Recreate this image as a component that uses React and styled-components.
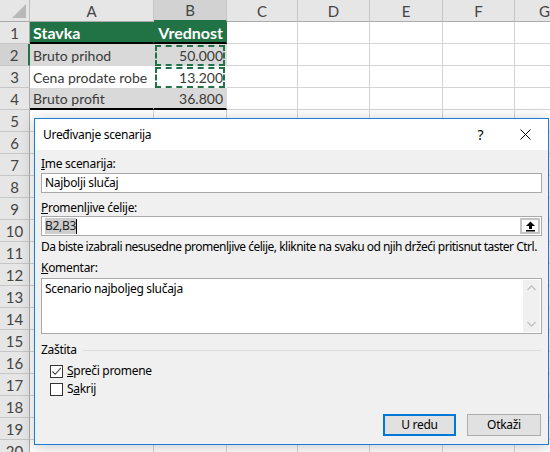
import React from 'react';
import styled, { createGlobalStyle, css } from 'styled-components';

const GlobalStyle = createGlobalStyle`
  html, body {
    margin: 0;
    padding: 0;
    background: #fff;
    overflow: hidden;
  }
  body {
    width: 550px;
    height: 452px;
  }
`;

const columns = [
  { name: 'A', width: 124 },
  { name: 'B', width: 73, selected: true },
  { name: 'C', width: 71 },
  { name: 'D', width: 72 },
  { name: 'E', width: 73 },
  { name: 'F', width: 72 },
  { name: 'G', width: 60 },
];

const data = {
  1: [
    { text: 'Stavka', fill: 'green' },
    { text: 'Vrednost', fill: 'green', right: true },
  ],
  2: [
    { text: 'Bruto prihod', fill: 'gray' },
    { text: '50.000', fill: 'gray', right: true, ants: true },
  ],
  3: [
    { text: 'Cena prodate robe', fill: 'white' },
    { text: '13.200', fill: 'white', right: true, ants: true },
  ],
  4: [
    { text: 'Bruto profit', fill: 'gray' },
    { text: '36.800', fill: 'gray', right: true },
  ],
};

const fills = {
  green: '#217346',
  gray: '#d9d9d9',
  white: '#ffffff',
};

const Sheet = styled.div`
  position: relative;
  width: 550px;
  height: 452px;
  overflow: hidden;
  display: grid;
  grid-template-columns: 30px ${columns.map((c) => c.width + 'px').join(' ')};
  grid-auto-rows: 22px;
  font-family: Lato, 'Liberation Sans', sans-serif;
  font-size: 14px;
`;

const Corner = styled.div`
  position: relative;
  background: #e6e6e6;
  border-right: 1px solid #bfbfbf;
  border-bottom: 1px solid #ababab;
  box-sizing: border-box;

  &::after {
    content: '';
    position: absolute;
    right: 3px;
    bottom: 3px;
    width: 0;
    height: 0;
    border-left: 14px solid transparent;
    border-bottom: 14px solid #b8b8b8;
  }
`;

const ColHeader = styled.div`
  display: flex;
  align-items: center;
  justify-content: center;
  box-sizing: border-box;
  font-size: 15px;
  color: #444;
  background: ${(p) => (p.$selected ? '#d2d2d2' : '#e6e6e6')};
  border-right: 1px solid #c6c6c6;
  border-bottom: ${(p) => (p.$selected ? '2px solid #217346' : '1px solid #ababab')};
`;

const RowHeader = styled.div`
  display: flex;
  align-items: center;
  justify-content: center;
  box-sizing: border-box;
  font-size: 15px;
  color: #444;
  background: ${(p) => (p.$selected ? '#d2d2d2' : '#e6e6e6')};
  border-bottom: 1px solid #c6c6c6;
  border-right: ${(p) => (p.$selected ? '2px solid #217346' : '1px solid #ababab')};
`;

const Cell = styled.div`
  position: relative;
  display: flex;
  align-items: center;
  justify-content: ${(p) => (p.$right ? 'flex-end' : 'flex-start')};
  padding: 1px 3px 0 3px;
  box-sizing: border-box;
  white-space: nowrap;
  color: #3a3a3a;
  border-right: 1px solid #d4d4d4;
  border-bottom: 1px solid #d4d4d4;

  ${(p) =>
    p.$fill &&
    css`
      background: ${fills[p.$fill]};
      border-right-color: ${fills[p.$fill]};
      border-bottom-color: ${fills[p.$fill]};
    `}

  ${(p) =>
    p.$fill === 'green' &&
    css`
      color: #fff;
      font-weight: 700;
      font-size: 16px;
    `}

  ${(p) =>
    p.$thick &&
    css`
      border-bottom: 2px solid #000;
    `}

  ${(p) =>
    p.$ants &&
    css`
      &::after {
        content: '';
        position: absolute;
        top: 1px;
        left: 1px;
        right: 1px;
        bottom: -1px;
        border: 2px dashed #217346;
      }
    `}
`;

/* ---------- dialog ---------- */

const Dialog = styled.div`
  position: absolute;
  left: 34px;
  top: 118px;
  width: 515px;
  height: 327px;
  box-sizing: border-box;
  border: 1px solid #1a7fd4;
  background: #f0f0f0;
  box-shadow: 0 2px 14px rgba(0, 0, 0, 0.22);
  display: flex;
  flex-direction: column;
  font-family: 'Noto Sans', 'Open Sans', sans-serif;
  font-size: 12px;
  letter-spacing: -0.3px;
  line-height: 16px;
  color: #000;
`;

const TitleBar = styled.div`
  height: 31px;
  flex: none;
  display: flex;
  align-items: center;
  background: #fff;
  padding-left: 8px;
`;

const Title = styled.div`
  flex: 1;
`;

const TitleButton = styled.div`
  width: 45px;
  height: 31px;
  display: flex;
  align-items: center;
  justify-content: center;
  font-size: 14px;
`;

const Body = styled.div`
  flex: 1;
  display: flex;
  flex-direction: column;
  padding: 6px 6px 0 6px;
`;

const Label = styled.div`
  margin-top: ${(p) => p.$mt || 0}px;
  white-space: nowrap;
  letter-spacing: ${(p) => (p.$tight ? '-0.5px' : 'inherit')};
`;

const TextBox = styled.div`
  position: relative;
  margin-top: ${(p) => p.$mt || 0}px;
  height: ${(p) => p.$h || 20}px;
  box-sizing: border-box;
  border: 1px solid #a9a9a9;
  background: #fff;
  padding: ${(p) => (p.$multi ? '2px 3px' : '0 3px')};
  display: flex;
  align-items: ${(p) => (p.$multi ? 'flex-start' : 'center')};
`;

const Selected = styled.span`
  background: #cdcdcd;
  color: #222;
`;

const Caret = styled.span`
  display: inline-block;
  width: 1px;
  height: 15px;
  background: #000;
`;

const RefButton = styled.div`
  position: absolute;
  right: 1px;
  top: 1px;
  width: 20px;
  height: 16px;
  box-sizing: border-box;
  border: 2px solid #c4c4c4;
  background: #fbfbfb;
  display: flex;
  align-items: center;
  justify-content: center;
`;

const ScrollBar = styled.div`
  position: absolute;
  top: 1px;
  right: 1px;
  bottom: 1px;
  width: 17px;
  background: #f0f0f0;
  display: flex;
  flex-direction: column;
  justify-content: space-between;
  align-items: center;
  padding: 5px 0;
  box-sizing: border-box;
`;

const Group = styled.div`
  margin-top: 8px;
  display: flex;
  align-items: center;
  gap: 6px;
`;

const GroupLine = styled.div`
  flex: 1;
  height: 1px;
  background: #dcdcdc;
  margin-right: 1px;
`;

const CheckRow = styled.label`
  margin-top: ${(p) => p.$mt || 0}px;
  display: flex;
  align-items: center;
  gap: 4px;
  padding-left: 9px;
`;

const Box = styled.span`
  width: 13px;
  height: 13px;
  box-sizing: border-box;
  border: 1px solid #333;
  background: #fff;
  display: flex;
  align-items: center;
  justify-content: center;
`;

const Buttons = styled.div`
  margin-top: 17px;
  display: flex;
  justify-content: flex-end;
  gap: 11px;
  padding-right: 1px;
`;

const Button = styled.div`
  width: ${(p) => (p.$primary ? 73 : 74)}px;
  height: 22px;
  box-sizing: border-box;
  background: #e1e1e1;
  border: ${(p) => (p.$primary ? '2px solid #0078d7' : '1px solid #adadad')};
  display: flex;
  align-items: center;
  justify-content: center;
`;

const CloseIcon = () => (
  <svg width="11" height="11" viewBox="0 0 11 11">
    <path d="M0.5 0.5 L10.5 10.5 M10.5 0.5 L0.5 10.5" stroke="#000" strokeWidth="1" fill="none" />
  </svg>
);

const CollapseIcon = () => (
  <svg width="11" height="11" viewBox="0 0 11 11">
    <path d="M5.5 0.5 L10 5 L7 5 L7 8 L4 8 L4 5 L1 5 Z" fill="#000" />
    <rect x="1" y="9" width="9" height="1.5" fill="#000" />
  </svg>
);

const Chevron = ({ down }) => (
  <svg width="9" height="6" viewBox="0 0 9 6">
    <path
      d={down ? 'M0.5 1 L4.5 5 L8.5 1' : 'M0.5 5 L4.5 1 L8.5 5'}
      stroke="#c2c2c2"
      strokeWidth="1.3"
      fill="none"
    />
  </svg>
);

const CheckIcon = () => (
  <svg width="11" height="11" viewBox="0 0 11 11">
    <path d="M1.5 5.5 L4.2 8.3 L9.8 2" stroke="#333" strokeWidth="1.1" fill="none" />
  </svg>
);

const ScenarioDialog = () => (
  <Dialog>
    <TitleBar>
      <Title>Uređivanje scenarija</Title>
      <TitleButton>?</TitleButton>
      <TitleButton>
        <CloseIcon />
      </TitleButton>
    </TitleBar>
    <Body>
      <Label>
        <u>I</u>me scenarija:
      </Label>
      <TextBox $mt={1}>Najbolji slučaj</TextBox>
      <Label $mt={7}>
        <u>P</u>romenljive ćelije:
      </Label>
      <TextBox>
        <Selected>B2,B3</Selected>
        <Caret />
        <RefButton>
          <CollapseIcon />
        </RefButton>
      </TextBox>
      <Label $mt={3} $tight>
        Da biste izabrali nesusedne promenljive ćelije, kliknite na svaku od njih držeći pritisnut taster Ctrl.
      </Label>
      <Label $mt={5}>
        <u>K</u>omentar:
      </Label>
      <TextBox $mt={2} $h={56} $multi>
        Scenario najboljeg slučaja
        <ScrollBar>
          <Chevron />
          <Chevron down />
        </ScrollBar>
      </TextBox>
      <Group>
        Zaštita
        <GroupLine />
      </Group>
      <CheckRow $mt={5}>
        <Box>
          <CheckIcon />
        </Box>
        <span>
          <u>S</u>preči promene
        </span>
      </CheckRow>
      <CheckRow $mt={2}>
        <Box />
        <span>
          S<u>a</u>krij
        </span>
      </CheckRow>
      <Buttons>
        <Button $primary>U redu</Button>
        <Button>Otkaži</Button>
      </Buttons>
    </Body>
  </Dialog>
);

const App = () => {
  const rows = Array.from({ length: 20 }, (_, i) => i + 1);
  return (
    <>
      <GlobalStyle />
      <Sheet>
        <Corner />
        {columns.map((c) => (
          <ColHeader key={c.name} $selected={c.selected}>
            {c.name}
          </ColHeader>
        ))}
        {rows.map((r) => (
          <React.Fragment key={r}>
            <RowHeader $selected={r === 2}>{r}</RowHeader>
            {columns.map((c, ci) => {
              const d = data[r] && data[r][ci];
              return (
                <Cell
                  key={c.name}
                  $fill={d && d.fill}
                  $right={d && d.right}
                  $ants={d && d.ants}
                  $thick={d && (r === 1 || r === 4)}
                >
                  {d && d.text}
                </Cell>
              );
            })}
          </React.Fragment>
        ))}
        <ScenarioDialog />
      </Sheet>
    </>
  );
};

export default App;
